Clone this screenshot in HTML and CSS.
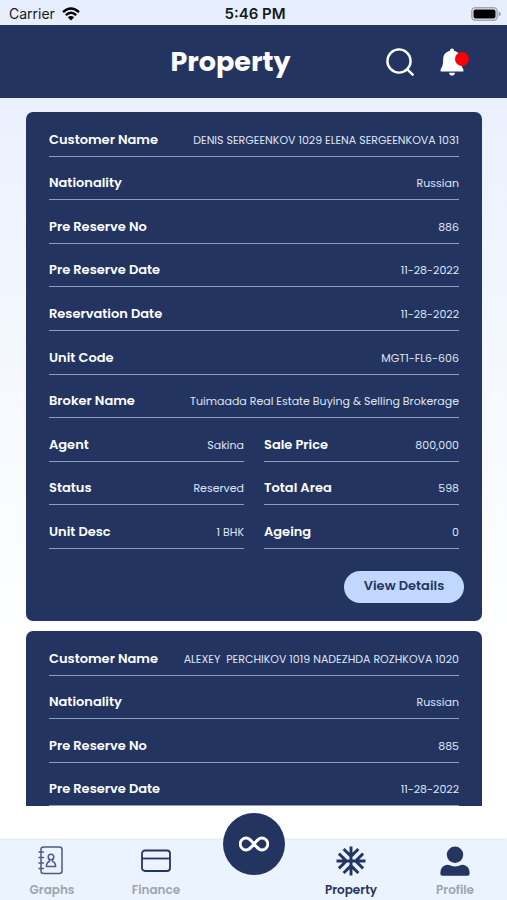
FILE: index.html
```html
<!DOCTYPE html>
<html lang="en">
<head>
<meta charset="utf-8">
<meta name="viewport" content="width=device-width, initial-scale=1">
<title>Property</title>
<link rel="stylesheet" href="styles.css">
</head>
<body>
<div class="app">
  <div class="status-bar">
    <div class="carrier">
      <span>Carrier</span>
      <svg class="wifi" viewBox="0 0 18 14" aria-hidden="true">
        <path d="M1 5.2Q9-2.2 17 5.2M3.8 8.2Q9 3.4 14.2 8.2" fill="none" stroke="#000" stroke-width="2.4"/>
        <path d="M9 13.6L5.8 10.3Q9 7.6 12.2 10.3Z"/>
      </svg>
    </div>
    <span class="clock">5:46 PM</span>
    <svg class="battery" viewBox="0 0 30 14" aria-hidden="true">
      <rect x=".8" y=".8" width="25.4" height="12.4" rx="3.6" fill="none" stroke="#a3a8b0" stroke-width="1.5"/>
      <rect x="2.5" y="2.4" width="22" height="9.2" rx="2"/>
      <path d="M27.6 4.6Q30 5.4 30 7T27.6 9.4Z" fill="#a3a8b0"/>
    </svg>
  </div>

  <header class="header">
    <h1>Property</h1>
    <div class="actions">
      <button class="icon-button" type="button" aria-label="Search">
        <svg viewBox="0 0 28 28" aria-hidden="true"><circle cx="13" cy="13" r="11.6"/><path d="M20.6 20.6L27.4 27.4"/></svg>
      </button>
      <button class="icon-button bell" type="button" aria-label="Notifications">
        <svg viewBox="0 0 28 28" aria-hidden="true"><path d="M10 2.8Q10 .6 12 .6T14 2.8C18.4 3.8 20.6 7 20.8 11C21 17 21.4 18.4 23.4 21.2V23.6H.6V21.2C2.6 18.4 3 17 3.2 11C3.4 7 5.6 3.8 10 2.8ZM9 24.8H15Q14.6 27.6 12 27.6T9 24.8Z"/></svg>
        <span class="dot"></span>
      </button>
    </div>
  </header>

  <main class="list">
    <article class="card">
      <dl class="fields">
        <div class="field"><dt>Customer Name</dt><dd>DENIS SERGEENKOV 1029 ELENA SERGEENKOVA 1031</dd></div>
        <div class="field"><dt>Nationality</dt><dd>Russian</dd></div>
        <div class="field"><dt>Pre Reserve No</dt><dd>886</dd></div>
        <div class="field"><dt>Pre Reserve Date</dt><dd>11-28-2022</dd></div>
        <div class="field"><dt>Reservation Date</dt><dd>11-28-2022</dd></div>
        <div class="field"><dt>Unit Code</dt><dd>MGT1-FL6-606</dd></div>
        <div class="field"><dt>Broker Name</dt><dd>Tuimaada Real Estate Buying &amp; Selling Brokerage</dd></div>
        <div class="field half"><dt>Agent</dt><dd>Sakina</dd></div>
        <div class="field half"><dt>Sale Price</dt><dd>800,000</dd></div>
        <div class="field half"><dt>Status</dt><dd>Reserved</dd></div>
        <div class="field half"><dt>Total Area</dt><dd>598</dd></div>
        <div class="field half"><dt>Unit Desc</dt><dd>1 BHK</dd></div>
        <div class="field half"><dt>Ageing</dt><dd>0</dd></div>
      </dl>
      <button class="details" type="button">View Details</button>
    </article>

    <article class="card">
      <dl class="fields short">
        <div class="field"><dt>Customer Name</dt><dd>ALEXEY&nbsp; PERCHIKOV 1019 NADEZHDA ROZHKOVA 1020</dd></div>
        <div class="field"><dt>Nationality</dt><dd>Russian</dd></div>
        <div class="field"><dt>Pre Reserve No</dt><dd>885</dd></div>
        <div class="field"><dt>Pre Reserve Date</dt><dd>11-28-2022</dd></div>
      </dl>
    </article>
  </main>

  <nav class="tabs" aria-label="Main">
    <a class="tab" href="#graphs">
      <svg viewBox="0 0 30 30" aria-hidden="true"><g fill="none" stroke="#4d5a86" stroke-width="1.5" stroke-linecap="round">
        <rect x="4" y="1" width="21" height="26.5" rx="2.5"/>
        <path d="M2 6H6.4M2 11.5H6.4M2 17H6.4M2 22.5H6.4"/>
        <circle cx="14" cy="11" r="2.8"/>
        <path d="M12.4 13.9V15.5Q9.4 16.5 9.4 20.5H18.6Q18.6 16.5 15.6 15.5V13.9"/></g></svg>
      <span>Graphs</span>
    </a>
    <a class="tab" href="#finance">
      <svg viewBox="0 0 30 30" aria-hidden="true"><g fill="none" stroke="#253562" stroke-width="1.8"><rect x="1" y="4.5" width="28" height="20.5" rx="3"/><path d="M1 12.5H29"/></g></svg>
      <span>Finance</span>
    </a>
    <a class="fab" href="#home" aria-label="Home">
      <svg viewBox="0 0 30 16" aria-hidden="true"><path d="M15 8C11.5 3.8 10 2 7.2 2A6 6 0 0 0 7.2 14C10 14 11.5 12.2 15 8C18.5 3.8 20 2 22.8 2A6 6 0 0 1 22.8 14C20 14 18.5 12.2 15 8Z" fill="none" stroke="#fff" stroke-width="2.8"/></svg>
    </a>
    <a class="tab active" href="#property" aria-current="page">
      <svg viewBox="0 0 30 30" aria-hidden="true"><path fill="#253562" d="M29.5 13.55H23.2L28.1 8.65L26.1 6.6L19.1 13.55H16.45V10.9L23.4 3.9L21.35 1.9L16.45 6.8V.5H13.55V6.8L8.65 1.9L6.6 3.9L13.55 10.9V13.55H10.9L3.9 6.6L1.9 8.65L6.8 13.55H.5V16.45H6.8L1.9 21.35L3.9 23.4L10.9 16.45H13.55V19.1L6.6 26.1L8.65 28.1L13.55 23.2V29.5H16.45V23.2L21.35 28.1L23.4 26.1L16.45 19.1V16.45H19.1L26.1 23.4L28.1 21.35L23.2 16.45H29.5Z"/></svg>
      <span>Property</span>
    </a>
    <a class="tab" href="#profile">
      <svg viewBox="0 0 30 30" aria-hidden="true"><g fill="#253562"><circle cx="15" cy="8.7" r="8.2"/><path d="M7 18.7Q9 18.7 11 19.7Q15 21.3 19 19.7Q21 18.7 23 18.7Q29.7 20 29.7 27.4Q29.7 29.8 27.6 29.8H2.4Q.3 29.8.3 27.4Q.3 20 7 18.7Z"/></g></svg>
      <span>Profile</span>
    </a>
  </nav>
</div>
</body>
</html>
```

FILE: styles.css
```css
* {
  box-sizing: border-box;
}

body {
  margin: 0;
  font-family: "Poppins", "Inter", "Open Sans", sans-serif;
  color: #fff;
}

button {
  border: 0;
  padding: 0;
  font: inherit;
  cursor: pointer;
}

a {
  color: inherit;
  text-decoration: none;
}

.app {
  display: flex;
  flex-direction: column;
  height: 100vh;
  background: linear-gradient(#e6eefd, #fff 72%);
}

.status-bar {
  display: grid;
  grid-template-columns: 1fr auto 1fr;
  align-items: center;
  height: 25px;
  padding: 2px 6px 0 9px;
  color: #151820;
  font-family: "Inter", sans-serif;
  font-size: 14px;
}

.carrier {
  display: flex;
  align-items: center;
  gap: 7px;
}

.wifi {
  width: 18px;
  height: 14px;
}

.clock {
  font-size: 15px;
  font-weight: 600;
}

.battery {
  width: 30px;
  height: 14px;
  justify-self: end;
}

.header {
  display: grid;
  grid-template-columns: 1fr auto;
  align-items: center;
  flex: none;
  height: 73px;
  padding: 0 39px 0 75px;
  background: #243461;
}

h1 {
  margin: 0;
  font-size: 27px;
  line-height: 40px;
  font-weight: 700;
  text-align: center;
}

.actions {
  display: flex;
  gap: 26px;
}

.icon-button {
  position: relative;
  width: 28px;
  height: 28px;
  background: none;
}

.icon-button svg {
  display: block;
  width: 28px;
  height: 28px;
  fill: none;
  stroke: #fff;
  stroke-width: 2.4;
}

.icon-button.bell svg {
  fill: #fff;
  stroke: none;
}

.dot {
  position: absolute;
  top: 4px;
  right: -1px;
  width: 14px;
  height: 14px;
  border-radius: 50%;
  background: #fb0007;
}

.list {
  flex: 1;
  min-height: 0;
  overflow: hidden;
  margin: 14px 25px 34px 26px;
}

.card {
  display: flex;
  flex-direction: column;
  align-items: flex-end;
  margin-bottom: 10px;
  padding: 1px 18px 18px;
  border-radius: 7px;
  background: #243461;
}

.fields {
  display: grid;
  grid-template-columns: 1fr 1fr;
  grid-template-rows: repeat(10, 1fr);
  column-gap: 20px;
  align-self: stretch;
  height: 436px;
  margin: 0 5px;
}

.fields.short {
  grid-template-rows: repeat(4, 1fr);
  height: 174px;
}

.field {
  grid-column: span 2;
  display: flex;
  align-items: flex-end;
  justify-content: space-between;
  padding-bottom: 6px;
  border-bottom: 1px solid #8f9dbd;
  line-height: 20px;
  white-space: nowrap;
}

.field.half {
  grid-column: span 1;
}

dt {
  font-size: 13px;
  font-weight: 600;
}

dd {
  margin: 0;
  color: #dfe5f2;
  font-size: 11px;
}

.details {
  margin-top: 22px;
  width: 120px;
  height: 32px;
  padding-bottom: 2px;
  border-radius: 16px;
  background: #c1d7fe;
  color: #243461;
  font-size: 13px;
  font-weight: 600;
}

.tabs {
  display: grid;
  grid-template-columns: 8fr 8fr 7fr 8fr 8fr;
  justify-items: center;
  flex: none;
  height: 60px;
  background: #ebf3fe;
  box-shadow: 0 -1px 2px #dde1e7;
}

.tab {
  display: flex;
  flex-direction: column;
  align-items: center;
  gap: 5px;
  padding-top: 6px;
  color: #a0a4ae;
  font-size: 12px;
  line-height: 18px;
  font-weight: 600;
}

.tab svg {
  width: 30px;
  height: 30px;
}

.tab.active {
  color: #243461;
}

.fab {
  display: grid;
  place-items: center;
  width: 62px;
  height: 62px;
  margin-top: -27px;
  border-radius: 50%;
  background: #243461;
}

.fab svg {
  width: 30px;
  height: 16px;
}
```
